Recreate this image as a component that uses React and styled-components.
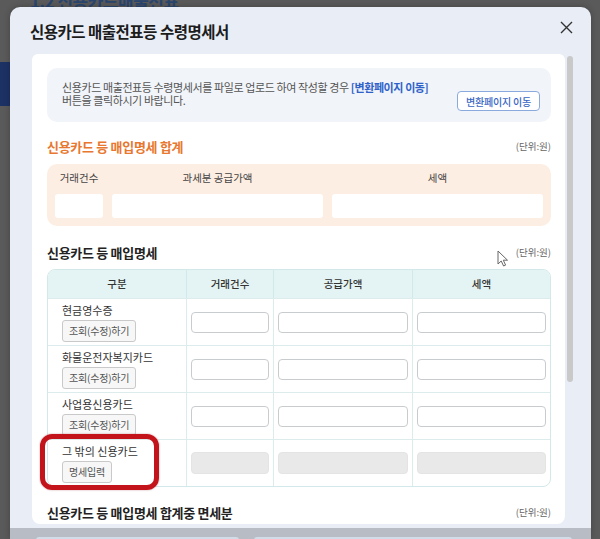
import React from "react";
import styled, { createGlobalStyle } from "styled-components";

const Global = createGlobalStyle`
  html, body { margin: 0; padding: 0; height: 539px; overflow: hidden; background: #5a5a5a; }
  body { font-family: "Noto Sans CJK KR", "Noto Sans", sans-serif; }
  * { box-sizing: border-box; }
`;

const Page = styled.div`
  position: relative;
  height: 539px;
  padding: 7px 9px 0 10px;
  overflow: hidden;
`;

const BackdropTab = styled.div`
  position: absolute;
  left: 0;
  top: 62px;
  width: 10px;
  height: 44px;
  background: #1d3264;
`;

const BackdropTitle = styled.div`
  position: absolute;
  left: 30px;
  top: -12px;
  font-size: 17px;
  font-weight: 700;
  color: #2a466f;
  letter-spacing: -0.5px;
  white-space: nowrap;
`;

const Modal = styled.div`
  position: relative;
  width: 581px;
  height: 532px;
  background: #e9eef6;
  border-radius: 10px 10px 0 0;
  display: flex;
  flex-direction: column;
  overflow: hidden;
  box-shadow: 0 0 6px rgba(0, 0, 0, 0.25);
`;

const Header = styled.div`
  height: 47px;
  flex-shrink: 0;
  display: flex;
  align-items: center;
  justify-content: space-between;
  padding: 0 18px 0 20px;
`;

const Title = styled.h2`
  margin: 0;
  font-size: 15.5px;
  font-weight: 600;
  color: #1c1c1c;
  letter-spacing: -0.5px;
`;

const CloseButton = styled.button`
  border: 0;
  background: none;
  padding: 0;
  width: 13px;
  height: 13px;
  margin-top: -7px;
  display: flex;
  cursor: pointer;
`;

const Body = styled.div`
  display: flex;
  height: 470px;
  flex-shrink: 0;
  padding-left: 22px;
`;

const Card = styled.div`
  width: 533px;
  background: #fff;
  border-radius: 6px 6px 8px 8px;
  padding: 14px 14px 0 15px;
  overflow: hidden;
`;

const ScrollTrack = styled.div`
  width: 26px;
  padding: 2px 0 0 2px;
`;

const Thumb = styled.div`
  width: 6px;
  height: 326px;
  background: #c9c9c9;
  border-radius: 3px;
`;

const InfoBox = styled.div`
  height: 54px;
  background: #f1f4f9;
  border-radius: 10px;
  display: flex;
  justify-content: space-between;
  align-items: center;
  padding: 0 11px 2px 15px;
`;

const InfoText = styled.p`
  margin: 0;
  font-size: 11px;
  line-height: 13.5px;
  color: #555;
  letter-spacing: -0.4px;
`;

const LinkText = styled.span`
  color: #2f62c9;
  font-weight: 700;
`;

const OutlineButton = styled.button`
  align-self: flex-end;
  margin-bottom: 9px;
  height: 20px;
  padding: 0 8px;
  border: 1px solid #8aa9dd;
  border-radius: 4px;
  background: #fff;
  color: #3765c4;
  font-family: "Noto Sans CJK KR", sans-serif;
  font-size: 10px;
  font-weight: 500;
  letter-spacing: -0.2px;
  cursor: pointer;
`;

const SectionHead = styled.div`
  position: relative;
  display: flex;
  justify-content: space-between;
  align-items: center;
  height: 16px;
  margin-top: ${(p) => p.$mt}px;
  margin-bottom: ${(p) => p.$mb}px;
`;

const SectionTitle = styled.h3`
  margin: 0;
  font-size: 13px;
  font-weight: 700;
  letter-spacing: -0.3px;
  color: ${(p) => (p.$accent ? "#e8772f" : "#222")};
`;

const Unit = styled.span`
  font-size: 9.5px;
  color: #666;
`;

const Cursor = styled.svg`
  position: absolute;
  left: 450px;
  top: 6px;
`;

const SumBox = styled.div`
  background: #fdeee3;
  border-radius: 10px;
  padding: 8px;
  display: grid;
  grid-template-columns: 48px 1fr 1fr;
  column-gap: 9px;
  row-gap: 10px;
`;

const SumLabel = styled.div`
  font-size: 10.5px;
  line-height: 12px;
  color: #444;
  text-align: center;
`;

const SumInput = styled.input`
  width: 100%;
  height: 24px;
  border: none;
  border-radius: 3px;
  background: #fff;
  outline: none;
`;

const Table = styled.div`
  border: 1px solid #d3e8e8;
  border-radius: 8px;
`;

const TRow = styled.div`
  display: grid;
  grid-template-columns: 139px 87px 139px 1fr;
  height: ${(p) => (p.$head ? 29 : 47)}px;
  border-bottom: 1px solid #dcebeb;
  background: ${(p) => (p.$head ? "#e4f3f3" : "transparent")};
  border-radius: ${(p) => (p.$head ? "7px 7px 0 0" : "0")};
  &:last-child {
    border-bottom: 0;
    height: 46px;
  }
`;

const HeadCell = styled.div`
  font-size: 10.5px;
  font-weight: 500;
  color: #333;
  text-align: center;
  line-height: 28px;
  border-right: 1px solid #d3e8e8;
  &:last-child {
    border-right: 0;
  }
`;

const LabelCell = styled.div`
  position: relative;
  display: flex;
  flex-direction: column;
  justify-content: center;
  align-items: flex-start;
  gap: 3px;
  padding-left: 14px;
  border-right: 1px solid #dcebeb;
`;

const RowLabel = styled.div`
  font-size: 11px;
  line-height: 14px;
  color: #333;
`;

const SmallButton = styled.button`
  height: 22px;
  padding: 0 6px;
  border: 1px solid #c9c9c9;
  border-radius: 3px;
  background: #f7f7f7;
  color: #555;
  font-family: "Noto Sans CJK KR", sans-serif;
  font-size: 10px;
  letter-spacing: -0.2px;
  cursor: pointer;
`;

const InputCell = styled.div`
  display: flex;
  align-items: center;
  padding: 0 4px;
  border-right: 1px solid #dcebeb;
  &:last-child {
    border-right: 0;
  }
`;

const CellInput = styled.input`
  width: 100%;
  height: ${(p) => (p.disabled ? 22 : 21)}px;
  border: 1px solid ${(p) => (p.disabled ? "#e4e4e4" : "#c9cccf")};
  border-radius: 4px;
  background: ${(p) => (p.disabled ? "#e9e9e9" : "#fff")};
  outline: none;
`;

const Highlight = styled.div`
  position: absolute;
  left: -8px;
  top: -6px;
  width: 119px;
  height: 56px;
  border: 5px solid #c3131b;
  border-radius: 12px;
  pointer-events: none;
  box-shadow: 0 0 2px rgba(120, 0, 0, 0.4);
`;

const Footer = styled.div`
  flex: 1;
  margin-top: 4px;
  background: #b8bcc4;
  display: flex;
  gap: 15px;
  padding: 9px 19px 0 26px;
`;

const FooterButton = styled.div`
  height: 24px;
  background: #d2dbe8;
  border-radius: 3px;
  flex: ${(p) => (p.$w ? `0 0 ${p.$w}px` : "1")};
`;

const rows = [
  { label: "현금영수증", action: "조회(수정)하기" },
  { label: "화물운전자복지카드", action: "조회(수정)하기" },
  { label: "사업용신용카드", action: "조회(수정)하기" },
  { label: "그 밖의 신용카드", action: "명세입력", disabled: true },
];

export default function App() {
  return (
    <>
      <Global />
      <Page>
        <BackdropTitle>1.2 신용카드매출전표</BackdropTitle>
        <BackdropTab />
        <Modal>
          <Header>
            <Title>신용카드 매출전표등 수령명세서</Title>
            <CloseButton aria-label="닫기">
              <svg width="13" height="13" viewBox="0 0 13 13">
                <path d="M1 1 L12 12 M12 1 L1 12" stroke="#333" strokeWidth="1.4" fill="none" />
              </svg>
            </CloseButton>
          </Header>
          <Body>
            <Card>
              <InfoBox>
                <InfoText>
                  신용카드 매출전표등 수령명세서를 파일로 업로드 하여 작성할 경우{" "}
                  <LinkText>[변환페이지 이동]</LinkText>
                  <br />
                  버튼을 클릭하시기 바랍니다.
                </InfoText>
                <OutlineButton>변환페이지 이동</OutlineButton>
              </InfoBox>

              <SectionHead $mt={16} $mb={10}>
                <SectionTitle $accent>신용카드 등 매입명세 합계</SectionTitle>
                <Unit>(단위:원)</Unit>
              </SectionHead>
              <SumBox>
                <SumLabel>거래건수</SumLabel>
                <SumLabel>과세분 공급가액</SumLabel>
                <SumLabel>세액</SumLabel>
                <SumInput />
                <SumInput />
                <SumInput />
              </SumBox>

              <SectionHead $mt={18} $mb={9}>
                <SectionTitle>신용카드 등 매입명세</SectionTitle>
                <Unit>(단위:원)</Unit>
                <Cursor width="12" height="17" viewBox="0 0 12 17">
                  <path
                    d="M1 1 L1 14 L4.2 11 L6.6 16 L8.6 15.1 L6.3 10.2 L10.5 10.2 Z"
                    fill="#fff"
                    stroke="#666"
                    strokeWidth="1"
                    strokeLinejoin="round"
                  />
                </Cursor>
              </SectionHead>
              <Table>
                <TRow $head>
                  <HeadCell>구분</HeadCell>
                  <HeadCell>거래건수</HeadCell>
                  <HeadCell>공급가액</HeadCell>
                  <HeadCell>세액</HeadCell>
                </TRow>
                {rows.map((r) => (
                  <TRow key={r.label}>
                    <LabelCell>
                      <RowLabel>{r.label}</RowLabel>
                      <SmallButton>{r.action}</SmallButton>
                      {r.disabled && <Highlight />}
                    </LabelCell>
                    <InputCell>
                      <CellInput disabled={r.disabled} />
                    </InputCell>
                    <InputCell>
                      <CellInput disabled={r.disabled} />
                    </InputCell>
                    <InputCell>
                      <CellInput disabled={r.disabled} />
                    </InputCell>
                  </TRow>
                ))}
              </Table>

              <SectionHead $mt={17} $mb={0}>
                <SectionTitle>신용카드 등 매입명세 합계중 면세분</SectionTitle>
                <Unit>(단위:원)</Unit>
              </SectionHead>
            </Card>
            <ScrollTrack>
              <Thumb />
            </ScrollTrack>
          </Body>
          <Footer>
            <FooterButton $w={203} />
            <FooterButton />
          </Footer>
        </Modal>
      </Page>
    </>
  );
}
